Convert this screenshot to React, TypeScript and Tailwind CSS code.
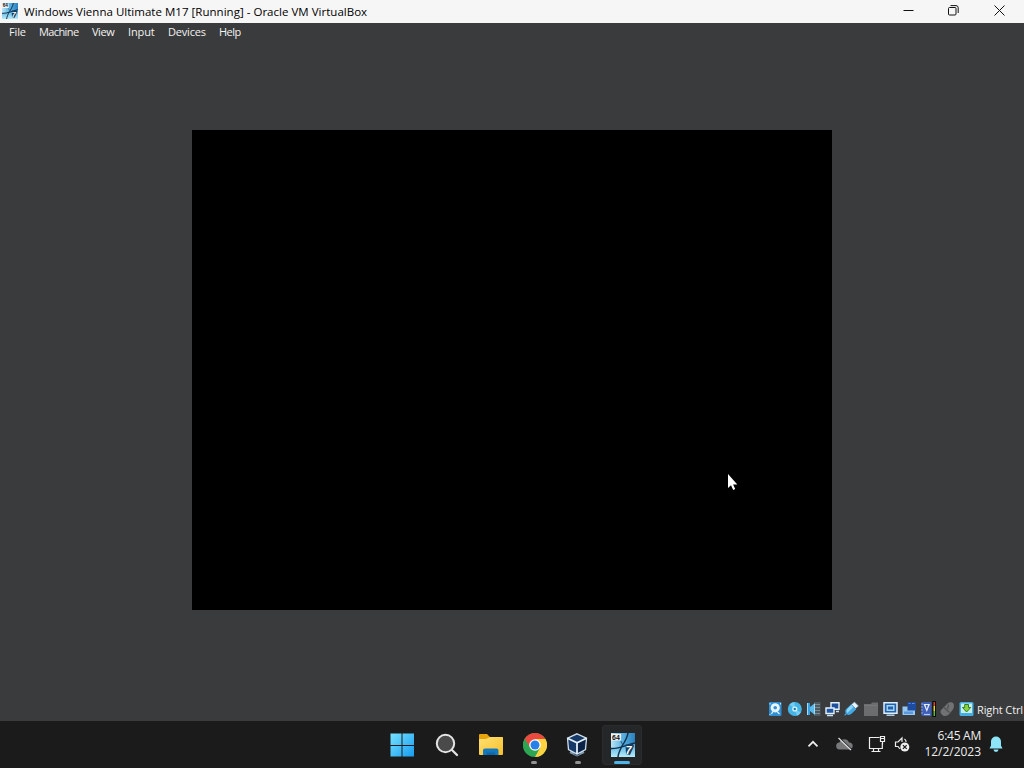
import type { ReactNode } from 'react';
import { clsx } from 'clsx';

const menuItems = [
  { label: 'File', className: 'w-[30px] tracking-[-0.12px]' },
  { label: 'Machine', className: 'w-[53px] tracking-[-0.6px]' },
  { label: 'View', className: 'w-9 tracking-[-0.45px]' },
  { label: 'Input', className: 'w-10 tracking-[-0.12px]' },
  { label: 'Devices', className: 'w-[51px] tracking-[-0.2px]' },
  { label: 'Help', className: 'w-9 tracking-[-0.5px]' },
];

function VmIcon({ className }: { className?: string }) {
  return (
    <svg viewBox="0 0 24 24" className={className} aria-hidden="true">
      <defs>
        <linearGradient id="vm-sky" x1="0" y1="0" x2="1" y2="0">
          <stop offset="0" stopColor="#b9e6f7" />
          <stop offset=".5" stopColor="#57b0e0" />
          <stop offset="1" stopColor="#2a80bd" />
        </linearGradient>
        <linearGradient id="vm-ground" x1="0" y1="0" x2="0" y2="1">
          <stop offset="0" stopColor="#4ca5dc" />
          <stop offset="1" stopColor="#b4ecfb" />
        </linearGradient>
      </defs>
      <rect width="24" height="24" fill="url(#vm-sky)" />
      <path d="M0 16c5 0 8-1 11-3l13-3v14H0z" fill="url(#vm-ground)" />
      <path d="M17 0c-1 6-4 10-6 13-2 4-4 8-4 11M0 15.500c8 .5 15-3.500 24-5.500" stroke="#12334f" strokeWidth="1.5" fill="none" />
      <path d="M10 8c0 3 3 4 5 5" stroke="#235780" strokeWidth="1" fill="none" />
      <rect x="0" y="1" width="10" height="6.500" fill="#f2f4f4" />
      <text x="1" y="6.700" fontSize="7" fontWeight="700" fontFamily="Liberation Sans, sans-serif" fill="#111">64</text>
      <path d="M14.500 11.500 22 11l1 2-4 9-4-1z" fill="#173d60" />
      <text x="14.500" y="20.500" fontSize="11" fontWeight="700" fontStyle="italic" fontFamily="Liberation Sans, sans-serif" fill="#fff">7</text>
    </svg>
  );
}

function TitleBar() {
  return (
    <header className="flex h-[23px] items-center bg-[#f6f6f6] text-black">
      <VmIcon className="ml-[2px] mb-px h-4 w-4 shrink-0" />
      <h1 className="ml-[6px] flex-1 whitespace-nowrap text-[11.5px] leading-[23px] tracking-[0.02px]">
        Windows Vienna Ultimate M17 [Running] - Oracle VM VirtualBox
      </h1>
      <button className="flex h-[21px] w-[46px] items-center justify-center self-start" aria-label="Minimize">
        <svg className="h-[11px] w-[11px]" viewBox="0 0 11 11"><path d="M.5 5.5h10" stroke="#111" /></svg>
      </button>
      <button className="flex h-[21px] w-[45px] items-center justify-center self-start" aria-label="Restore">
        <svg className="h-[11px] w-[11px]" viewBox="0 0 11 11" fill="none" stroke="#111">
          <rect x=".5" y="2.5" width="7.5" height="7.5" rx="1" />
          <path d="M2.5.6H8a2.2 2.2 0 0 1 2.2 2.2V8" />
        </svg>
      </button>
      <button className="mr-px flex h-[21px] w-[47px] items-center justify-center self-start" aria-label="Close">
        <svg className="h-[11px] w-[11px]" viewBox="0 0 11 11"><path d="m.5.5 10 10m0-10-10 10" stroke="#111" /></svg>
      </button>
    </header>
  );
}

function Pointer() {
  return (
    <svg className="absolute left-[535px] top-[343px] h-[20px] w-[13px]" viewBox="0 0 13 20" aria-hidden="true">
      <path d="M1 1v14l3-2.8L6.2 17l2-.9L6.1 11.5h4.2z" fill="#fff" />
    </svg>
  );
}

function StatusIcon({ label, children }: { label: string; children: ReactNode }) {
  return (
    <svg className="h-4 w-4 shrink-0" viewBox="0 0 16 16" fill="none" role="img" aria-label={label}>
      {children}
    </svg>
  );
}

function StatusBar() {
  return (
    <div className="flex h-[24px] items-center justify-end text-[#f0f0f0]">
      <div className="mb-px flex items-center gap-[3.1px]">
        <StatusIcon label="Hard disks">
          <rect x="2" y="1" width="12.5" height="14" rx="1" fill="#2f8ed2" />
          <circle cx="8.2" cy="6.8" r="4.6" fill="#e8f7ff" />
          <circle cx="8.2" cy="6.8" r="1.8" fill="#3b8dcd" />
          <path d="m4.500 13 2-3.500h2.500M10 10.500l2.500 2.500" stroke="#d9efff" strokeWidth="1.3" />
          <path d="M3 2v1.500M13.500 2v1.500M3 13v1" stroke="#bde3fb" />
        </StatusIcon>
        <StatusIcon label="Optical drives">
          <circle cx="8.8" cy="8" r="7" fill="#45b4e6" />
          <path d="M8.800 8 3.500 3.500a7 7 0 0 1 5-2.500zM8.800 8l6 3.500a7 7 0 0 1-4 3.300z" fill="#74cdf2" />
          <circle cx="8.8" cy="8" r="2.6" fill="#d9f5ff" />
          <circle cx="8.8" cy="8" r="1.2" fill="#29769d" />
        </StatusIcon>
        <StatusIcon label="Audio">
          <path d="M9 1h6.500v14H9z" fill="#4d5961" />
          <path d="M10 3.500h5M10 6.500h5M10 9.500h5M10 12.500h5" stroke="#7d8990" />
          <path d="M2 2h3v12H2z" fill="#359fdf" />
          <path d="m5 6 5-4v12L5 10z" fill="#59b9ec" />
          <path d="M2.500 2v12M9.500 3v10" stroke="#9bddfa" />
        </StatusIcon>
        <StatusIcon label="Network">
          <path d="M7 1.700h8v6.500H7z" fill="#204f9d" stroke="#e4f2ff" strokeWidth="1.4" />
          <path d="M2 7h8v5.500H2z" fill="#2357a3" stroke="#e4f2ff" strokeWidth="1.4" />
          <path d="M3 14.500h6M12 10.500h3" stroke="#c4e3f8" strokeWidth="1.4" />
        </StatusIcon>
        <StatusIcon label="USB">
          <path d="m11.500 1 4 4-3 2.500-4-4z" fill="#e7f4fb" stroke="#7398b1" strokeWidth=".6" />
          <path d="m8.200 3.200 5 5-4.700 4.600c-2 1.500-3 1.200-5 .5l-1.500 1.500-.8-.8 1.500-1.500C2 10.500 2 9.200 3.500 7.800z" fill="#44a8e5" />
          <path d="m8.400 4 2 2-6 6c-1-1.500-1-2.500 0-4z" fill="#8fd6fa" />
        </StatusIcon>
        <StatusIcon label="Shared folders">
          <path d="M1 3h7l1-1.500h6V15H1z" fill="#6c6d6f" />
          <path d="M1 4.500h14" stroke="#77787a" />
        </StatusIcon>
        <StatusIcon label="Display">
          <path d="M2 1.800h13v10.400H2z" fill="#2362a8" stroke="#dceeff" strokeWidth="1.5" />
          <path d="M5.200 4.700h6.600v4.600H5.200z" stroke="#a6d6fa" strokeWidth="1.4" />
          <path d="M4.500 14.200h8" stroke="#b8dbf4" strokeWidth="1.4" />
        </StatusIcon>
        <StatusIcon label="Recording">
          <path d="M6.500 1H15v9H6.500z" fill="#1d4ba0" />
          <path d="M7.500 2.500h2M11 2.500h2.500" stroke="#5c8fd8" />
          <path d="M1.500 5.500h5v4H14V14H1.500z" fill="#94c8f3" />
          <path d="M3 10.500h9V13H3z" fill="#5b99dc" />
        </StatusIcon>
        <StatusIcon label="Processor features">
          <rect x="1.5" y="1" width="10" height="14" rx="1" fill="#3f5fb5" />
          <path d="M1 3h2M1 6h2M1 9h2M1 12h2" stroke="#8fa4dc" />
          <path d="M3.500 3h6.500l-3.200 8z" fill="#e3eafc" />
          <path d="m5.500 4 1.300 4 1.200-4z" fill="#3f5fb5" />
          <path d="M4 13.500h6" stroke="#b6c9f4" strokeWidth="1.2" />
          <path d="M12.300 0H16v16h-3.700z" fill="#090d0a" />
          <path d="M13.500 1H15v4h-1.500z" fill="#e63c20" />
          <path d="M13.500 5H15v5h-1.500z" fill="#f3d321" />
          <path d="M13.500 10H15v5h-1.500z" fill="#58bb32" />
        </StatusIcon>
        <StatusIcon label="Mouse integration">
          <path d="M2 9 8.500 2.500C10.500.5 14 .8 14.700 3s.1 4.500-1.500 6.500l-3.500 4c-2 2-5.200 1.800-6.700.2S1 11 2 9z" fill="#707274" />
          <path d="m5 6.500 5.500 5M9.500 3.500l-1 4.500" stroke="#505254" strokeWidth="1.3" />
        </StatusIcon>
        <StatusIcon label="Keyboard capture">
          <rect x="1.5" y="1" width="14" height="14" rx="1.5" fill="#45aee2" />
          <path d="M3 2.500h11v9.500H3z" fill="#c6efe8" />
          <path d="M6.700 3.500h3.800v3h2.200l-4.100 4.500-4.100-4.500h2.200z" fill="#8bd33c" stroke="#337f25" />
        </StatusIcon>
      </div>
      <span className="ml-[3px] mt-[3px] w-[47px] whitespace-nowrap text-[11px] tracking-[-0.12px]">Right Ctrl</span>
    </div>
  );
}

function TaskButton({ label, running, active, children }: { label: string; running?: boolean; active?: boolean; children: ReactNode }) {
  return (
    <button
      aria-label={label}
      className={clsx(
        'relative flex h-10 w-10 items-center justify-center rounded',
        active && 'bg-[#252627] ring-1 ring-inset ring-[#2b2c2d]'
      )}
    >
      {children}
      {running && (
        <span className={clsx('absolute bottom-px h-[3px] rounded-full', active ? 'w-4 bg-[#4cb4e8]' : 'w-[6px] bg-[#929292]')} />
      )}
    </button>
  );
}

function TaskbarApps() {
  return (
    <nav className="flex items-center gap-1 pl-[382px]">
      <TaskButton label="Start">
        <svg className="h-6 w-6" viewBox="0 0 24 24">
          <defs>
            <linearGradient id="start-blue" x1="0" y1="0" x2="24" y2="24" gradientUnits="userSpaceOnUse">
              <stop stopColor="#79e4ff" /><stop offset="1" stopColor="#159bf0" />
            </linearGradient>
          </defs>
          <path d="M.5.500h11V12H.5zM12.500.500H24V12H12.500zM.5 13h11v10.500H.5zM12.500 13H24v10.500H12.500z" fill="url(#start-blue)" />
        </svg>
      </TaskButton>
      <TaskButton label="Search">
        <svg className="ml-px h-6 w-6" viewBox="0 0 24 24">
          <circle cx="10.500" cy="10.500" r="8.700" fill="#4a4a4b" stroke="#e4e4e4" strokeWidth="2" />
          <path d="m17 17 5 5" stroke="#e4e4e4" strokeWidth="2.300" strokeLinecap="round" />
        </svg>
      </TaskButton>
      <TaskButton label="File Explorer">
        <svg className="ml-px h-6 w-6" viewBox="0 0 24 24">
          <defs>
            <linearGradient id="folder" x1="0" y1="0" x2="1" y2="1">
              <stop stopColor="#ffdf72" /><stop offset="1" stopColor="#f8c02c" />
            </linearGradient>
          </defs>
          <path d="M0 2a1 1 0 0 1 1-1h7l3 3h12a1 1 0 0 1 1 1v7H0z" fill="#e8a50b" />
          <path d="M0 6h7l4-2h12a1 1 0 0 1 1 1v16a1 1 0 0 1-1 1H1a1 1 0 0 1-1-1z" fill="url(#folder)" />
          <path d="M4 22v-4.500a2 2 0 0 1 2-2h11.500a2 2 0 0 1 2 2V22z" fill="#1478be" />
          <path d="M7.500 19.500h8.500V22H7.500z" fill="#0d67aa" />
        </svg>
      </TaskButton>
      <TaskButton label="Google Chrome" running>
        <svg className="ml-px h-6 w-6" viewBox="0 0 24 24">
          <circle cx="12" cy="12" r="12" fill="#2da653" />
          <path d="M1.600 6a12 12 0 0 1 20.800 0L12 7.500 7.500 15z" fill="#ea4a3f" />
          <path d="M22.400 6A12 12 0 0 1 12 24l5-9L12 6z" fill="#ffd33f" />
          <path d="M1.600 6 7 15l5 2-3 6.600A12 12 0 0 1 1.600 6z" fill="#2da653" />
          <circle cx="12" cy="12" r="5.800" fill="#fff" />
          <circle cx="12" cy="12" r="4.500" fill="#287fe8" />
        </svg>
      </TaskButton>
      <TaskButton label="Oracle VM VirtualBox" running>
        <svg className="mr-[2px] h-6 w-6" viewBox="0 0 24 24">
          <path d="m6 17-1.500 3L12 23.500l7.500-3.500-1.500-3z" fill="#8298ab" />
          <path d="m9 20.500 3 1.500 3-1.500" stroke="#33506e" strokeWidth="1.200" fill="none" />
          <path d="m12 .8 9.500 4.400-1 11.300-8.500 4.500-8.500-4.500-1-11.300z" fill="#173967" stroke="#d0dfec" strokeWidth="1.300" />
          <path d="m12 10 8.500-4.200-1 10.200-7.500 4z" fill="#0c2348" />
          <path d="m2.500 5.200 9.500 4.600 9.500-4.600M12 9.800V21" stroke="#e6f0f7" strokeWidth="1.800" fill="none" />
        </svg>
      </TaskButton>
      <TaskButton label="Windows Vienna Ultimate M17" running active>
        <VmIcon className="ml-px h-6 w-6" />
      </TaskButton>
    </nav>
  );
}

function SystemTray() {
  return (
    <div className="mb-px flex items-center text-[#eeeeee]">
      <svg className="h-3 w-3" viewBox="0 0 12 12" fill="none"><path d="m1.500 8.300 4.500-4.500 4.500 4.500" stroke="currentColor" strokeWidth="1.700" /></svg>
      <svg className="ml-[17px] h-4 w-[18px]" viewBox="0 0 18 16">
        <path d="M4 13.500a3.500 3.500 0 0 1-.6-7A5.200 5.200 0 0 1 13 6.600a3.500 3.500 0 0 1 1 6.900z" fill="#77797a" />
        <path d="m3.500 2 12.500 12" stroke="#1b1b1b" strokeWidth="1.300" />
        <path d="m2.500 2 12.500 12" stroke="#e0e0e0" strokeWidth="1.200" />
      </svg>
      <svg className="ml-[14px] h-[18px] w-[18px]" viewBox="0 0 18 18" fill="none" stroke="currentColor" strokeWidth="1.200">
        <path d="M11.500 2.500H1.500v11h12.800V8M5.500 13.500v3m5-3v3M3.500 16.500h9M12.500 1.500h4V6.500h-4zM12.500 3.500h4M14.500 6.500v3" />
      </svg>
      <svg className="ml-[8px] h-4 w-[16px]" viewBox="0 0 16 16" fill="none">
        <path d="M6 13 4 10.500H1.500V6H4l4-4v4M10.500 3c1 .7 1.500 1.700 1.700 3" stroke="currentColor" strokeWidth="1.200" />
        <circle cx="10.800" cy="11" r="4.500" fill="#eee" />
        <path d="m8.900 9.100 3.800 3.800m0-3.800-3.800 3.800" stroke="#191919" strokeWidth="1.200" />
      </svg>
      <div className="ml-[8px] w-[63px] whitespace-nowrap text-right text-[12px] leading-4">
        <div className="tracking-[-0.25px]">6:45 AM</div>
        <div className="tracking-[-0.03px]">12/2/2023</div>
      </div>
      <svg className="ml-[8px] mr-[21px] h-4 w-[14px]" viewBox="0 0 14 16" fill="#8de5f7">
        <path d="M7 .500a5 5 0 0 0-5 5v4L.500 12.500h13L12 9.500v-4a5 5 0 0 0-5-5zM4.500 13.500h5a2.500 2.500 0 0 1-5 0z" />
      </svg>
    </div>
  );
}

export default function App() {
  return (
    <div className="flex h-screen w-screen flex-col overflow-hidden bg-[#3a3b3c] font-['Open_Sans','Noto_Sans',sans-serif]">
      <TitleBar />
      <nav className="flex h-[19px] items-center pl-[9px] text-[11px] text-[#f2f2f2]">
        {menuItems.map((item) => (
          <button key={item.label} className={clsx('whitespace-nowrap text-left', item.className)}>{item.label}</button>
        ))}
      </nav>
      <main className="flex flex-1 flex-col">
        <div className="relative mx-auto mt-[88px] h-[480px] w-[640px] bg-black">
          <Pointer />
        </div>
        <div className="mt-auto">
          <StatusBar />
        </div>
      </main>
      <footer className="flex h-[47px] items-center justify-between bg-[#1b1b1b]">
        <TaskbarApps />
        <SystemTray />
      </footer>
    </div>
  );
}
